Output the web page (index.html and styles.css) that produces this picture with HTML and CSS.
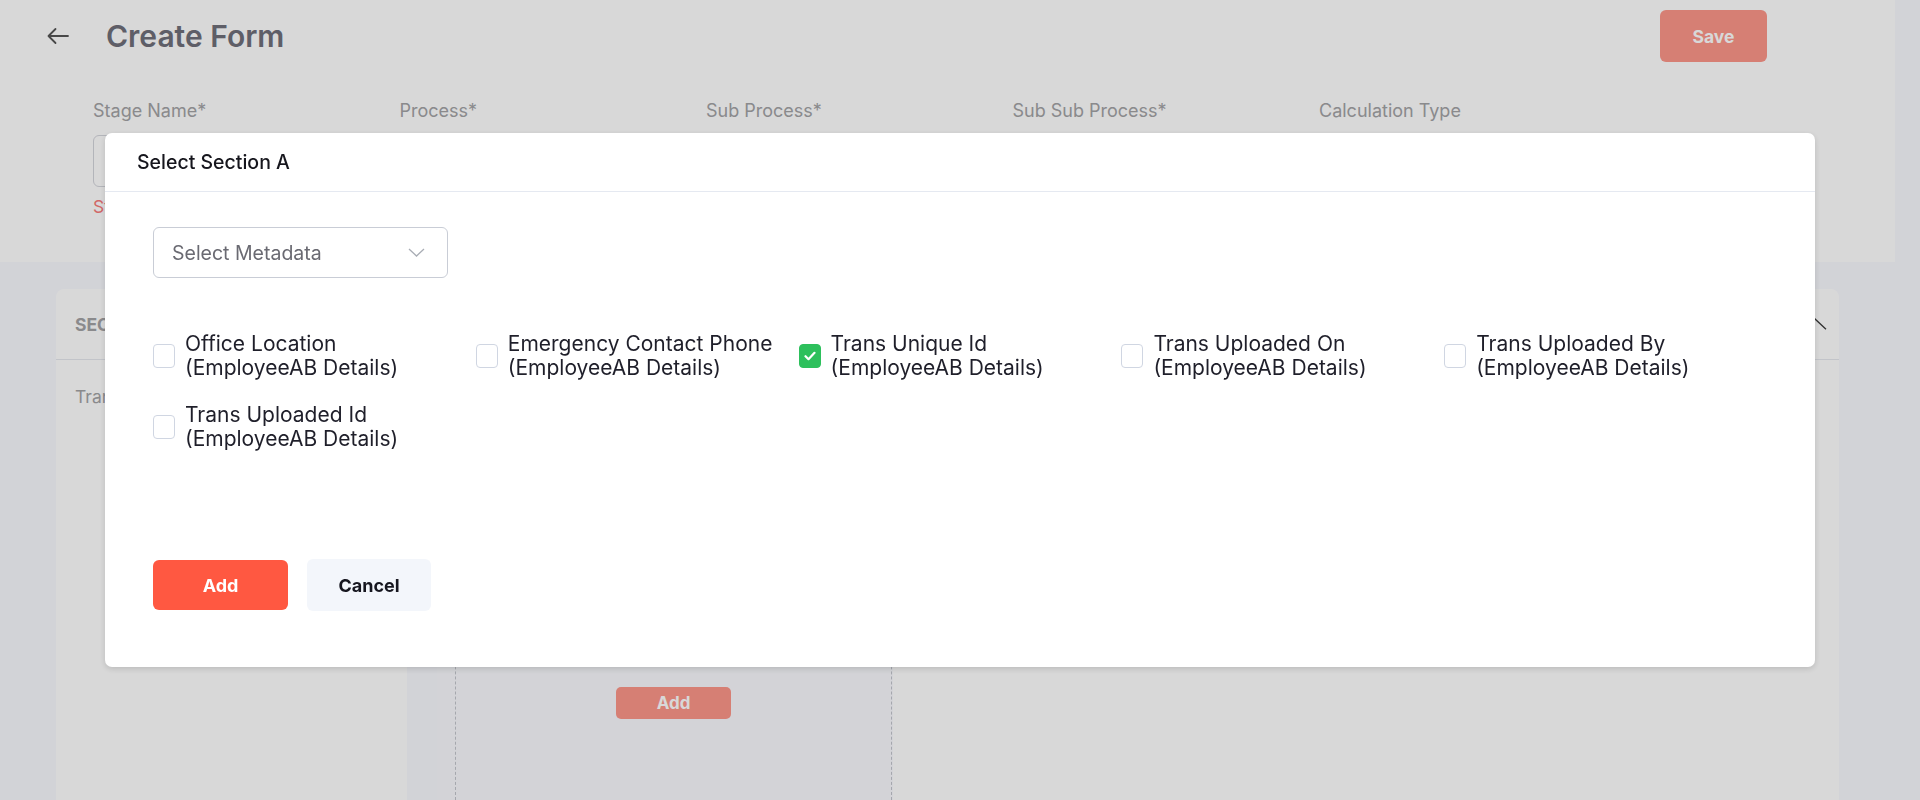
FILE: index.html
```html
<!DOCTYPE html>
<html lang="en">
<head>
<meta charset="utf-8">
<title>Create Form</title>
<link rel="stylesheet" href="styles.css">
</head>
<body>
<div class="page">
  <header class="head">
    <div class="topbar">
      <div class="title-wrap">
        <svg class="back" width="24" height="18" viewBox="0 0 24 18" aria-hidden="true">
          <path d="M22 9H2.5M9.5 2L2.5 9l7 7" fill="none" stroke="#555" stroke-width="1.8" stroke-linecap="round" stroke-linejoin="round"/>
        </svg>
        <h1 class="title">Create Form</h1>
      </div>
      <button class="save-btn">Save</button>
    </div>
    <div class="fields">
      <div class="field">
        <label class="field-label">Stage Name*</label>
        <div class="field-input"></div>
        <div class="field-error">Stage Name is required</div>
      </div>
      <div class="field">
        <label class="field-label">Process*</label>
        <div class="field-input"></div>
      </div>
      <div class="field">
        <label class="field-label">Sub Process*</label>
        <div class="field-input"></div>
      </div>
      <div class="field">
        <label class="field-label">Sub Sub Process*</label>
        <div class="field-input"></div>
      </div>
      <div class="field">
        <label class="field-label">Calculation Type</label>
        <div class="field-input"></div>
      </div>
    </div>
  </header>

  <main class="content">
    <section class="card card-left">
      <div class="card-head"><span class="card-head-title">SECTIONS</span></div>
      <div class="card-item">Trans Unique Id</div>
    </section>
    <section class="card card-right">
      <div class="card-head card-head-right">
        <span class="card-head-title">Section A</span>
        <svg class="chev-up" width="24" height="12" viewBox="0 0 24 12" aria-hidden="true">
          <path d="M1 11.2L12 1 23 11.2" fill="none" stroke="#3a3a3a" stroke-width="1.3"/>
        </svg>
      </div>
      <div class="card-body">
        <div class="pane">
          <div class="dropzone">
            <button class="ghost-add">Add</button>
          </div>
        </div>
        <div class="pane-rest"></div>
      </div>
    </section>
  </main>
</div>

<div class="overlay">
  <div class="modal">
    <div class="modal-head">Select Section A</div>
    <div class="modal-body">
      <div class="select">
        <span>Select Metadata</span>
        <svg width="17" height="9" viewBox="0 0 17 9" aria-hidden="true">
          <path d="M1 1l7.5 7L16 1" fill="none" stroke="#a9adb5" stroke-width="1.3"/>
        </svg>
      </div>
      <div class="options">
        <label class="opt"><span class="cb"></span><span class="opt-text">Office Location<br>(EmployeeAB Details)</span></label>
        <label class="opt"><span class="cb"></span><span class="opt-text">Emergency Contact Phone<br>(EmployeeAB Details)</span></label>
        <label class="opt"><span class="cb cb-on"><svg width="12" height="10" viewBox="0 0 12 10" aria-hidden="true"><path d="M1.5 5.2l3 3L10.5 1.8" fill="none" stroke="#fff" stroke-width="2.2" stroke-linecap="round" stroke-linejoin="round"/></svg></span><span class="opt-text">Trans Unique Id<br>(EmployeeAB Details)</span></label>
        <label class="opt"><span class="cb"></span><span class="opt-text">Trans Uploaded On<br>(EmployeeAB Details)</span></label>
        <label class="opt"><span class="cb"></span><span class="opt-text">Trans Uploaded By<br>(EmployeeAB Details)</span></label>
        <label class="opt"><span class="cb"></span><span class="opt-text">Trans Uploaded Id<br>(EmployeeAB Details)</span></label>
      </div>
      <div class="actions">
        <button class="btn btn-add">Add</button>
        <button class="btn btn-cancel">Cancel</button>
      </div>
    </div>
  </div>
</div>
</body>
</html>
```

FILE: styles.css
```css
* { box-sizing: border-box; }

html, body {
  margin: 0;
  height: 100%;
}

body {
  background: #f8f9fe;
  font-family: Inter, "Noto Sans", "Liberation Sans", sans-serif;
  overflow: hidden;
}

button {
  font-family: inherit;
  border: none;
  cursor: pointer;
}

.page {
  width: calc(100% - 25px);
}

/* ---------- header ---------- */
.head {
  background: #ffffff;
  height: 262px;
  padding: 10px 128px 0 46px;
}

.topbar {
  display: flex;
  align-items: center;
  justify-content: space-between;
  height: 52px;
}

.title-wrap {
  display: flex;
  align-items: center;
  gap: 36px;
}

.back { display: block; }

.title {
  margin: 0;
  font-size: 30px;
  font-weight: 600;
  color: #6f6f7a;
}

.save-btn {
  width: 107px;
  height: 52px;
  border-radius: 6px;
  background: #fd968a;
  color: #ffffff;
  font-size: 17.5px;
  font-weight: 700;
}

.fields {
  display: grid;
  grid-template-columns: repeat(5, 306.5px);
  margin: 38px 0 0 47px;
}

.field-label {
  display: block;
  font-size: 18px;
  line-height: 22px;
  color: #a3a3a6;
}

.field-input {
  margin-top: 13px;
  width: 290px;
  height: 52px;
  border: 1px solid #d4d6dc;
  border-radius: 6px;
  background: #fff;
}

.field-error {
  margin-top: 9px;
  font-size: 17.5px;
  line-height: 22px;
  color: #f77b7b;
}

/* ---------- content ---------- */
.content {
  display: flex;
  gap: 30px;
  padding: 27px 56px 0 56px;
}

.card {
  background: #ffffff;
  border-radius: 8px 8px 0 0;
  height: 511px;
}

.card-left {
  width: 351px;
  flex: none;
}

.card-right {
  flex: 1;
  display: flex;
  flex-direction: column;
}

.card-head {
  height: 71px;
  border-bottom: 1px solid #e6e8ee;
  display: flex;
  align-items: center;
  padding: 0 19px;
}

.card-head-right {
  justify-content: space-between;
  padding: 0 12px 0 19px;
}

.card-head-title {
  font-size: 17.5px;
  font-weight: 700;
  color: #a3a3a6;
}

.card-item {
  padding: 26px 19px;
  font-size: 17.5px;
  color: #a3a3a6;
}

.card-body {
  flex: 1;
  display: flex;
}

.pane {
  width: 456px;
  background: #f9fafe;
  padding-left: 18px;
}

.dropzone {
  height: 100%;
  border-left: 1px dashed #c3c6cd;
  border-right: 1px dashed #c3c6cd;
  margin-right: 1px;
  display: flex;
  justify-content: center;
  align-items: flex-start;
  padding-top: 327px;
}

.ghost-add {
  width: 115px;
  height: 32px;
  border-radius: 5px;
  background: #fd968a;
  color: #fff;
  font-size: 17px;
  font-weight: 700;
}

.pane-rest { flex: 1; }

/* ---------- overlay / modal ---------- */
.overlay {
  position: fixed;
  inset: 0;
  background: rgba(0, 0, 0, 0.153);
  display: flex;
  justify-content: center;
  align-items: flex-start;
  padding-top: 133px;
}

.modal {
  width: 1710px;
  background: #ffffff;
  border-radius: 7px;
  box-shadow: 0 2px 6px rgba(0, 0, 0, 0.14);
}

.modal-head {
  height: 59px;
  border-bottom: 1px solid #e5e9f1;
  display: flex;
  align-items: center;
  padding-left: 32px;
  font-size: 19.5px;
  font-weight: 500;
  color: #16161d;
}

.modal-body {
  padding: 35px 48px 56px 48px;
}

.select {
  width: 295px;
  height: 51px;
  border: 1px solid #c9cdd6;
  border-radius: 6px;
  display: flex;
  align-items: center;
  justify-content: space-between;
  padding: 0 22px 0 18px;
  font-size: 19.5px;
  color: #6a6a72;
}

.select svg { display: block; }

.options {
  margin-top: 54px;
  display: grid;
  grid-template-columns: repeat(5, 1fr);
  row-gap: 23px;
}

.opt {
  display: flex;
  align-items: center;
  gap: 10px;
}

.cb {
  width: 22px;
  height: 24px;
  flex: none;
  border: 1.5px solid #d0d6e2;
  border-radius: 4px;
  background: #fff;
  display: flex;
  align-items: center;
  justify-content: center;
}

.cb-on {
  background: #2dc05c;
  border-color: #2dc05c;
}

.opt-text {
  font-size: 21px;
  line-height: 24px;
  color: #1f1f2a;
}

.actions {
  margin-top: 108px;
  display: flex;
  align-items: center;
  gap: 19px;
}

.btn {
  height: 50px;
  border-radius: 6px;
  font-size: 18px;
  font-weight: 700;
}

.btn-add {
  width: 135px;
  background: #ff5841;
  color: #ffffff;
}

.btn-cancel {
  width: 124px;
  height: 52px;
  background: #f3f6fb;
  color: #16161f;
}
```
